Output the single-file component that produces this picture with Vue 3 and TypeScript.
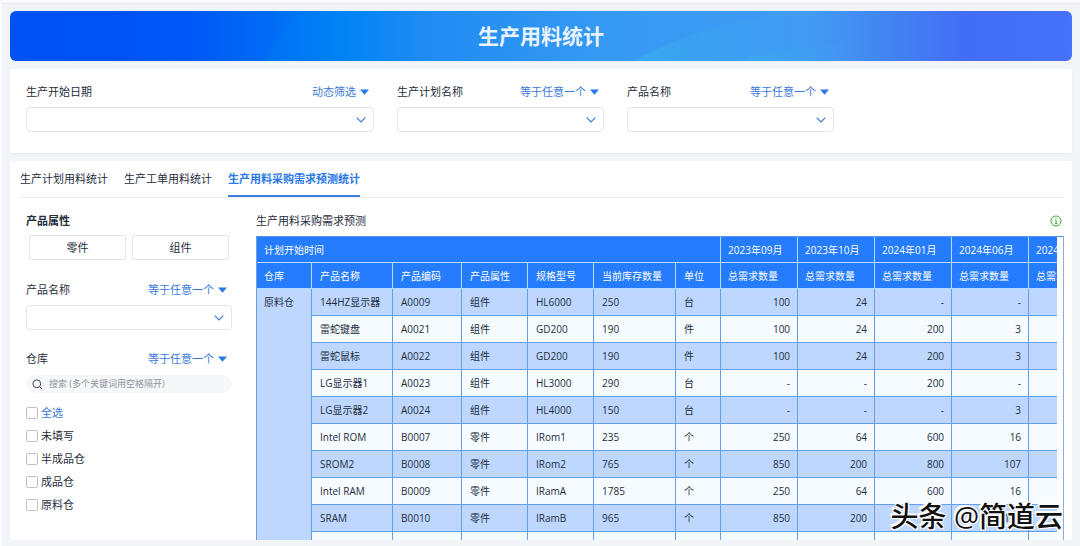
<script setup lang="ts">
import { ref } from 'vue'

interface Filter {
  id: string
  label: string
  mode: string
  wide: boolean
}

interface Row {
  name: string
  code: string
  kind: string
  model: string
  stock: string
  unit: string
  demand: string[]
}

const filters: Filter[] = [
  { id: 'start', label: '生产开始日期', mode: '动态筛选', wide: true },
  { id: 'plan', label: '生产计划名称', mode: '等于任意一个', wide: false },
  { id: 'product', label: '产品名称', mode: '等于任意一个', wide: false },
]

const tabs: string[] = ['生产计划用料统计', '生产工单用料统计', '生产用料采购需求预测统计']
const activeTab = ref<number>(2)

const kinds: string[] = ['零件', '组件']
const warehouses: string[] = ['全选', '未填写', '半成品仓', '成品仓', '原料仓']
const checked = ref<string[]>([])
const keyword = ref<string>('')

const months: string[] = ['2023年09月', '2023年10月', '2024年01月', '2024年06月', '2024年07月']
const columns: string[] = ['仓库', '产品名称', '产品编码', '产品属性', '规格型号', '当前库存数量', '单位']

const rows: Row[] = [
  { name: '144HZ显示器', code: 'A0009', kind: '组件', model: 'HL6000', stock: '250', unit: '台', demand: ['100', '24', '-', '-', ''] },
  { name: '雷蛇键盘', code: 'A0021', kind: '组件', model: 'GD200', stock: '190', unit: '件', demand: ['100', '24', '200', '3', ''] },
  { name: '雷蛇鼠标', code: 'A0022', kind: '组件', model: 'GD200', stock: '190', unit: '件', demand: ['100', '24', '200', '3', ''] },
  { name: 'LG显示器1', code: 'A0023', kind: '组件', model: 'HL3000', stock: '290', unit: '台', demand: ['-', '-', '200', '-', ''] },
  { name: 'LG显示器2', code: 'A0024', kind: '组件', model: 'HL4000', stock: '150', unit: '台', demand: ['-', '-', '-', '3', ''] },
  { name: 'Intel ROM', code: 'B0007', kind: '零件', model: 'IRom1', stock: '235', unit: '个', demand: ['250', '64', '600', '16', ''] },
  { name: 'SROM2', code: 'B0008', kind: '零件', model: 'IRom2', stock: '765', unit: '个', demand: ['850', '200', '800', '107', ''] },
  { name: 'Intel RAM', code: 'B0009', kind: '零件', model: 'IRamA', stock: '1785', unit: '个', demand: ['250', '64', '600', '16', ''] },
  { name: 'SRAM', code: 'B0010', kind: '零件', model: 'IRamB', stock: '965', unit: '个', demand: ['850', '200', '800', '107', ''] },
  { name: '', code: '', kind: '零件', model: '', stock: '', unit: '个', demand: ['', '', '', '', ''] },
]
</script>

<template>
  <div class="page">
    <header class="banner">
      <svg class="banner-art" viewBox="0 0 1062 50" preserveAspectRatio="none" aria-hidden="true">
        <defs>
          <linearGradient id="base" x1="0" x2="1" y1="0" y2="0">
            <stop offset="0" stop-color="#0050f6" />
            <stop offset="0.17" stop-color="#0058f8" />
            <stop offset="0.25" stop-color="#006df6" />
            <stop offset="0.31" stop-color="#0083f5" />
            <stop offset="0.4" stop-color="#228cf3" />
            <stop offset="0.55" stop-color="#3499f3" />
            <stop offset="0.75" stop-color="#429bf2" />
            <stop offset="0.81" stop-color="#4389f2" />
            <stop offset="0.9" stop-color="#436df5" />
            <stop offset="1" stop-color="#4472f8" />
          </linearGradient>
          <linearGradient id="glow" x1="0" x2="1" y1="0" y2="0">
            <stop offset="0" stop-color="#38b0ee" stop-opacity="0.65" />
            <stop offset="1" stop-color="#429bf2" stop-opacity="0" />
          </linearGradient>
          <linearGradient id="beam" x1="0" x2="1" y1="0" y2="0">
            <stop offset="0" stop-color="#0085f6" stop-opacity="0.3" />
            <stop offset="1" stop-color="#0085f6" stop-opacity="0" />
          </linearGradient>
        </defs>
        <rect width="1062" height="50" fill="url(#base)" />
        <path d="M255 50 C264 32 274 15 290 0 H360 V50 Z" fill="url(#beam)" />
        <path d="M624 50 C660 29 711 11 778 2 L850 0 V50 Z" fill="url(#glow)" />
        <path d="M730 50 C758 40 793 34 850 31 V50 Z" fill="url(#glow)" />
      </svg>
      <h1>生产用料统计</h1>
    </header>

    <section class="card filters">
      <div v-for="f in filters" :key="f.id" class="field" :class="{ wide: f.wide }">
        <div class="field-head">
          <label :for="f.id">{{ f.label }}</label>
          <button type="button" class="mode">
            {{ f.mode }}
            <svg width="9" height="6" viewBox="0 0 9 6" aria-hidden="true"><path d="M0 .4h9L4.500 5.800z" /></svg>
          </button>
        </div>
        <div class="select">
          <select :id="f.id"></select>
          <svg width="10" height="6" viewBox="0 0 10 6" aria-hidden="true"><path d="M.7.7 5 5 9.300.7" /></svg>
        </div>
      </div>
    </section>

    <section class="card main">
      <nav class="tabs" role="tablist">
        <button
          v-for="(tab, i) in tabs"
          :key="tab"
          type="button"
          role="tab"
          class="tab"
          :class="{ active: i === activeTab }"
          :aria-selected="i === activeTab"
          @click="activeTab = i"
        >
          {{ tab }}
        </button>
      </nav>

      <div class="content">
        <aside class="side">
          <h2>产品属性</h2>
          <div class="kinds">
            <button v-for="k in kinds" :key="k" type="button">{{ k }}</button>
          </div>

          <div class="field side-field">
            <div class="field-head">
              <label for="side-product">产品名称</label>
              <button type="button" class="mode">
                等于任意一个
                <svg width="9" height="6" viewBox="0 0 9 6" aria-hidden="true"><path d="M0 .4h9L4.500 5.800z" /></svg>
              </button>
            </div>
            <div class="select">
              <select id="side-product"></select>
              <svg width="10" height="6" viewBox="0 0 10 6" aria-hidden="true"><path d="M.7.7 5 5 9.300.7" /></svg>
            </div>
          </div>

          <div class="field-head store-head">
            <label for="search">仓库</label>
            <button type="button" class="mode">
              等于任意一个
              <svg width="9" height="6" viewBox="0 0 9 6" aria-hidden="true"><path d="M0 .4h9L4.500 5.800z" /></svg>
            </button>
          </div>
          <div class="search">
            <svg width="11" height="11" viewBox="0 0 11 11" aria-hidden="true">
              <circle cx="4.800" cy="4.800" r="3.900" />
              <path d="m7.700 7.700 2.600 2.600" />
            </svg>
            <input id="search" v-model="keyword" type="text" placeholder="搜索 (多个关键词用空格隔开)" />
          </div>
          <ul class="checks">
            <li v-for="(w, i) in warehouses" :key="w">
              <label :class="{ all: i === 0 }">
                <input v-model="checked" type="checkbox" :value="w" />
                {{ w }}
              </label>
            </li>
          </ul>
        </aside>

        <div class="report">
          <div class="report-head">
            <h3>生产用料采购需求预测</h3>
            <svg width="12" height="12" viewBox="0 0 12 12" aria-hidden="true">
              <circle cx="6" cy="6" r="5" />
              <path d="M5.200 5.200H6.100V8.500M4.900 8.600h2.400M6 3.100v1" />
            </svg>
          </div>
          <div class="frame">
            <div class="scroll">
              <table>
                <colgroup>
                  <col class="c-store" /><col class="c-name" /><col class="c-code" /><col class="c-kind" />
                  <col class="c-kind" /><col class="c-stock" /><col class="c-unit" />
                  <col v-for="m in months" :key="m" class="c-month" />
                </colgroup>
                <thead>
                  <tr>
                    <th colspan="7">计划开始时间</th>
                    <th v-for="m in months" :key="m" class="month">{{ m }}</th>
                  </tr>
                  <tr>
                    <th v-for="c in columns" :key="c">{{ c }}</th>
                    <th v-for="m in months" :key="m" class="month">总需求数量</th>
                  </tr>
                </thead>
                <tbody>
                  <tr v-for="(r, i) in rows" :key="i">
                    <td v-if="i === 0" class="store" :rowspan="rows.length">原料仓</td>
                    <td>{{ r.name }}</td>
                    <td>{{ r.code }}</td>
                    <td>{{ r.kind }}</td>
                    <td>{{ r.model }}</td>
                    <td>{{ r.stock }}</td>
                    <td>{{ r.unit }}</td>
                    <td v-for="(d, j) in r.demand" :key="j" class="num">{{ d }}</td>
                  </tr>
                </tbody>
              </table>
            </div>
          </div>
        </div>
      </div>
    </section>

    <div class="watermark">头条 @简道云</div>
  </div>
</template>

<style>
body {
  margin: 0;
  background: #f3f4f8;
}
</style>

<style scoped>
.page {
  position: relative;
  box-sizing: border-box;
  height: 100vh;
  padding: 11px 8px 6px;
  display: flex;
  flex-direction: column;
  gap: 8px;
  overflow: hidden;
  border-left: 2px solid #fafafc;
  background: linear-gradient(#fbfbfd, #fbfbfd 2px, #ececf1 3px, #f3f4f8 5px);
  color: #1f2d3d;
  font-family: "Open Sans", "Noto Sans CJK SC", sans-serif;
  font-size: 11px;
  line-height: 16px;
}

button,
select,
input {
  font: inherit;
  color: inherit;
}

button {
  cursor: pointer;
}

h1,
h2,
h3 {
  margin: 0;
  font-size: 11px;
}

.banner {
  position: relative;
  flex: none;
  height: 50px;
  display: flex;
  align-items: center;
  justify-content: center;
  overflow: hidden;
  border-radius: 6px;
}

.banner-art {
  position: absolute;
  inset: 0;
  width: 100%;
  height: 100%;
}

.banner h1 {
  position: relative;
  color: #e8f3ff;
  font-size: 21px;
  line-height: 32px;
  font-weight: 700;
}

.card {
  background: #fff;
  border-radius: 2px;
}

.filters {
  flex: none;
  display: flex;
  gap: 23px;
  padding: 15px 238px 21px 16px;
  box-shadow: 0 1px 2px #e6e9ed;
}

.filters .field {
  flex: 207;
}

.filters .wide {
  flex: 348;
}

.field {
  display: flex;
  flex-direction: column;
  gap: 7px;
  min-width: 0;
}

.field-head {
  display: flex;
  align-items: center;
  justify-content: space-between;
  padding-right: 5px;
}

.mode {
  display: flex;
  align-items: center;
  gap: 4px;
  padding: 0;
  border: 0;
  background: none;
  color: #3a7ad9;
}

.mode svg {
  fill: #2878e8;
}

.select {
  position: relative;
  display: flex;
}

.select select {
  appearance: none;
  flex: 1;
  min-width: 0;
  height: 25px;
  border: 1px solid #e2e4e8;
  border-radius: 4px;
  background: #fff;
}

.select svg {
  position: absolute;
  right: 8px;
  top: 10px;
  fill: none;
  stroke: #3a7ad9;
  stroke-width: 1.2;
  pointer-events: none;
}

.main {
  flex: 1;
  min-height: 0;
  display: flex;
  flex-direction: column;
  overflow: hidden;
}

.tabs {
  flex: none;
  display: flex;
  gap: 16px;
  margin: 0 8px 0 10px;
  height: 36px;
  border-bottom: 1px solid #e8eaee;
}

.tab {
  padding: 2px 0 0;
  border: 0;
  border-bottom: 2px solid transparent;
  background: none;
  white-space: nowrap;
}

.tab.active {
  border-bottom-color: #4080e0;
  color: #2878ea;
  font-weight: 700;
}

.content {
  flex: 1;
  min-height: 0;
  display: flex;
  gap: 24px;
  padding: 15px 8px 0 16px;
}

.side {
  flex: none;
  width: 206px;
}

.side h2 {
  font-weight: 700;
}

.kinds {
  display: flex;
  gap: 6px;
  padding: 6px 3px 0;
}

.kinds button {
  flex: 1;
  height: 25px;
  padding: 0;
  border: 1px solid #e2e4e8;
  border-radius: 2px;
  background: #fff;
}

.side-field {
  margin-top: 22px;
}

.store-head {
  margin-top: 21px;
}

.search {
  display: flex;
  align-items: center;
  gap: 6px;
  height: 18px;
  margin-top: 8px;
  padding: 0 6px;
  border-radius: 9px;
  background: #f6f7f9;
}

.search svg {
  flex: none;
  fill: none;
  stroke: #3c4654;
  stroke-width: 1;
}

.search input {
  flex: 1;
  min-width: 0;
  padding: 0;
  border: 0;
  outline: 0;
  background: none;
  font-size: 9px;
  line-height: 16px;
}

.search input::placeholder {
  color: #8e949c;
}

.checks {
  display: flex;
  flex-direction: column;
  gap: 7px;
  margin: 12px 0 0;
  padding: 0;
  list-style: none;
}

.checks label {
  display: flex;
  align-items: center;
  gap: 3px;
}

.checks .all {
  color: #3a7ad9;
}

.checks input {
  appearance: none;
  width: 12px;
  height: 12px;
  margin: 0;
  border: 1px solid #bfc3c9;
  border-radius: 2px;
  background: #fff;
}

.checks input:checked {
  background: #2878ea;
}

.report {
  flex: 1;
  min-width: 0;
  display: flex;
  flex-direction: column;
}

.report-head {
  flex: none;
  display: flex;
  align-items: center;
  justify-content: space-between;
  padding: 0 2px 7px 0;
}

.report-head h3 {
  font-weight: 400;
}

.report-head svg {
  fill: none;
  stroke: #3aa53a;
  stroke-width: 1;
}

.frame {
  flex: 1;
  min-height: 0;
  padding-right: 6px;
  overflow: hidden;
  border-top: 1px solid #5b94e0;
  border-right: 1px solid #8cabe0;
}

.scroll {
  height: 100%;
  overflow: hidden;
}

table {
  width: 830px;
  table-layout: fixed;
  border-collapse: separate;
  border-spacing: 0;
  border-left: 1px solid #6d9fe6;
  font-size: 10px;
}

.c-store { width: 55px; }
.c-name { width: 81px; }
.c-code { width: 69px; }
.c-kind { width: 66px; }
.c-stock { width: 82px; }
.c-unit { width: 45px; }
.c-month { width: 77px; }

th,
td {
  box-sizing: border-box;
  height: 27px;
  padding: 0 7px 0 8px;
  overflow: hidden;
  border-right: 1px solid #659ee8;
  border-bottom: 1px solid #659ee8;
  text-align: left;
  white-space: nowrap;
  font-weight: 400;
}

th {
  height: 26px;
  border-color: #b4dcff;
  background: #257cff;
  color: #fff;
}

td {
  background: #f5fbff;
}

tbody tr:nth-child(odd) td,
td.store {
  background: #bdd7ff;
}

th:first-child,
th.month,
td.store {
  padding-left: 7px;
}

td.store {
  padding-top: 5px;
  vertical-align: top;
}

.num {
  text-align: right;
}

.watermark {
  position: absolute;
  right: 17px;
  bottom: 12px;
  color: #111;
  font-size: 28px;
  line-height: 36px;
  font-weight: 500;
  text-shadow: -1px -1px 0 #fff, -2px -2px 0 #fff, 1px -1px 0 #fff, -1px 1px 0 #fff, 1px 1px 0 #fff;
  pointer-events: none;
}
</style>
